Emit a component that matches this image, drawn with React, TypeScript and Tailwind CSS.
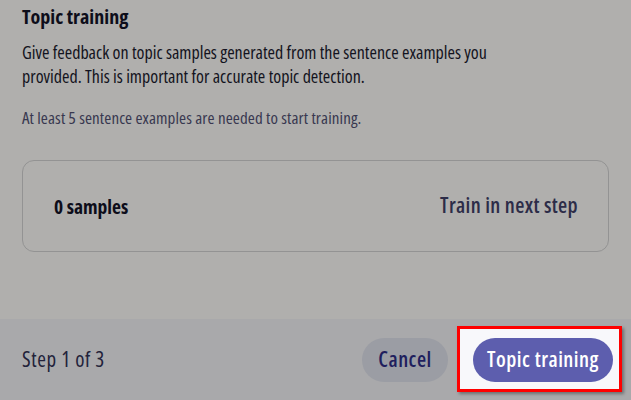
import React from "react";

export default function App() {
  return (
    <div className="w-[631px] h-[400px] bg-[#b0afad] flex flex-col overflow-hidden" style={{ fontFamily: "'Open Sans', Roboto, sans-serif" }}>
      <div className="flex-1 px-[22px] pt-[4px]">
        <h1 className="text-[20px] leading-[26px] font-bold text-[#0d0d1a] font-stretch-[79%]">Topic training</h1>
        <p className="mt-[10px] max-w-[500px] text-[18px] leading-[24px] text-[#131320] font-stretch-[77%]">
          Give feedback on topic samples generated from the sentence examples you provided. This is important for accurate topic detection.
        </p>
        <p className="mt-[20px] text-[17px] leading-[20px] tracking-[0.1px] text-[#383850] font-stretch-[77%]">At least 5 sentence examples are needed to start training.</p>
        <div className="mt-[32px] h-[92px] rounded-[12px] border border-[#939393] flex items-center justify-between pl-[31px] pr-[30px]">
          <span className="text-[19.5px] font-bold text-[#0d0d1a] mt-[2px] font-stretch-[79%]">0 samples</span>
          <span className="text-[21px] font-semibold tracking-[0.35px] text-[#2c2c48] font-stretch-[79%]">Train in next step</span>
        </div>
      </div>
      <div className="h-[81px] bg-[#a9a9ab] flex items-center justify-between pl-[22px] pr-[18px]">
        <span className="text-[21px] tracking-[0.6px] text-[#22223a] font-stretch-[79%]">Step 1 of 3</span>
        <div className="flex items-center gap-[25px]">
          <button className="h-[44px] w-[86px] rounded-full bg-[#9b9da4] text-[21px] font-semibold tracking-[0.5px] text-[#1f1f5e] font-stretch-[79%]">Cancel</button>
          <div className="relative">
            <span className="absolute -left-[16px] -right-[9px] -top-[12px] -bottom-[10px] border-[3px] border-[#ff0000] bg-[#f8f8fb] shadow-[2px_2px_3px_rgba(0,0,0,0.35)]"></span>
            <button className="relative h-[44px] w-[140px] rounded-full bg-[#5d5eae] text-[21px] font-semibold tracking-[0.5px] text-white font-stretch-[79%]">Topic training</button>
          </div>
        </div>
      </div>
    </div>
  );
}
